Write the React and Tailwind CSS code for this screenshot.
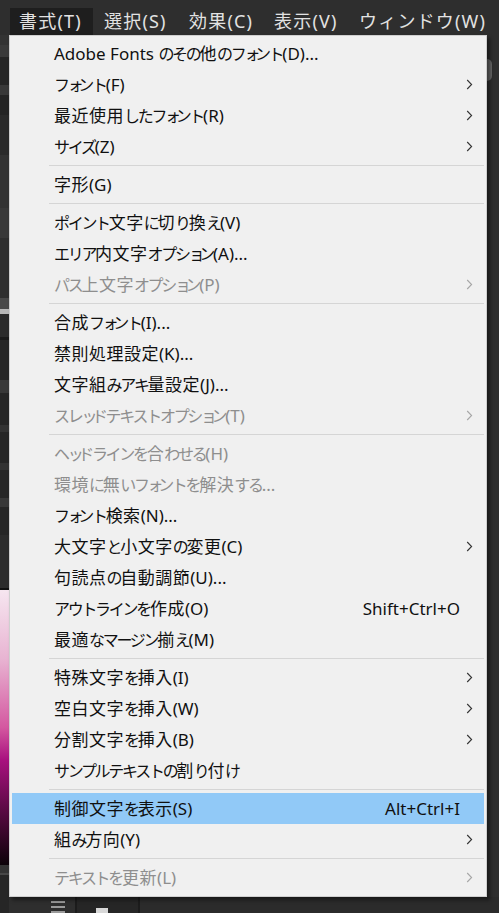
import React from "react";

const FONT = { fontFamily: '"Segoe UI", "Noto Sans", "Noto Sans CJK JP", sans-serif' };

const items = [
  { t: "Adobe Fonts のその他のフォント(D)..." },
  { t: "フォント(F)", sub: true },
  { t: "最近使用したフォント(R)", sub: true },
  { t: "サイズ(Z)", sub: true },
  "sep",
  { t: "字形(G)" },
  "sep",
  { t: "ポイント文字に切り換え(V)" },
  { t: "エリア内文字オプション(A)..." },
  { t: "パス上文字オプション(P)", dis: true, sub: true },
  "sep",
  { t: "合成フォント(I)..." },
  { t: "禁則処理設定(K)..." },
  { t: "文字組みアキ量設定(J)..." },
  { t: "スレッドテキストオプション(T)", dis: true, sub: true },
  "sep",
  { t: "ヘッドラインを合わせる(H)", dis: true },
  { t: "環境に無いフォントを解決する...", dis: true },
  { t: "フォント検索(N)..." },
  { t: "大文字と小文字の変更(C)", sub: true },
  { t: "句読点の自動調節(U)..." },
  { t: "アウトラインを作成(O)", sc: "Shift+Ctrl+O" },
  { t: "最適なマージン揃え(M)" },
  "sep",
  { t: "特殊文字を挿入(I)", sub: true },
  { t: "空白文字を挿入(W)", sub: true },
  { t: "分割文字を挿入(B)", sub: true },
  { t: "サンプルテキストの割り付け" },
  "sep",
  { t: "制御文字を表示(S)", sc: "Alt+Ctrl+I", hl: true },
  { t: "組み方向(Y)", sub: true },
  "sep",
  { t: "テキストを更新(L)", dis: true, sub: true },
];

const SMALL = "ァィゥェォッャュョヮぁぃぅぇぉっゃゅょ";

function cat(ch) {
  if (SMALL.includes(ch)) return "s";
  const c = ch.codePointAt(0);
  if (c >= 0x3040 && c <= 0x30ff) return "k";
  if (c >= 0x4e00 && c <= 0x9fff) return "h";
  return "l";
}

function Txt({ s }) {
  const runs = [];
  for (const ch of s) {
    const k = cat(ch);
    if (runs.length && runs[runs.length - 1].k === k) runs[runs.length - 1].s += ch;
    else runs.push({ k, s: ch });
  }
  return runs.map((r, i) =>
    r.k === "k" ? (
      <span key={i} className="text-[16px] tracking-[-2.3px]">{r.s}</span>
    ) : r.k === "s" ? (
      <span key={i} className="text-[16px] tracking-[-5.5px]">{r.s}</span>
    ) : r.k === "h" ? (
      <span key={i} className="tracking-[0.5px]">{r.s}</span>
    ) : (
      <span key={i}>{r.s}</span>
    )
  );
}

function Chevron({ dis }) {
  return (
    <svg width="7" height="11" viewBox="0 0 7 11" className="block">
      <path d="M1.2 1 L5.6 5.5 L1.2 10" fill="none" stroke={dis ? "#a6a6a6" : "#333333"} strokeWidth="1.1" />
    </svg>
  );
}

function Row({ it }) {
  return (
    <div className={`flex items-center h-[31px] pl-[42px] ${it.hl ? "bg-[#91c9f7]" : ""}`}>
      <span
        className={`flex-1 text-[17px] leading-none whitespace-nowrap ${
          it.dis ? "text-[#8e8e8e]" : "text-[#101010]"
        }`}
      >
        <Txt s={it.t} />
      </span>
      {it.sc && <span className="text-[17px] leading-none text-[#101010] whitespace-nowrap">{it.sc}</span>}
      <div className="w-[24px] h-full flex items-center pl-[6px]">{it.sub && <Chevron dis={it.dis} />}</div>
    </div>
  );
}

function Sep() {
  return (
    <div className="h-[7px] flex items-center pl-[37px]">
      <div className="h-px w-full bg-[#d5d5d5]" />
    </div>
  );
}

const strip = [
  [10, "#333333"],
  [12, "#3a3a3a"],
  [28, "#252525"],
  [10, "#383838"],
  [20, "#242424"],
  [40, "#2a2a2a"],
  [53, "#323232"],
  [30, "#383838"],
  [60, "#2e2e2e"],
  [11, "#484848"],
  [5, "#b8b8b8"],
  [23, "#2b2b2b"],
  [3, "#1a1a1a"],
  [40, "#262626"],
  [13, "#383838"],
  [32, "#262626"],
  [7, "#333333"],
  [31, "#262626"],
  [7, "#333333"],
  [28, "#262626"],
  [9, "#383838"],
  [28, "#262626"],
  [53, "#2c2c2c"],
  [2, "#111111"],
];

export default function App() {
  const bar = ["書式(T)", "選択(S)", "効果(C)", "表示(V)", "ウィンドウ(W)"];
  return (
    <div className="relative w-[499px] h-[913px] overflow-hidden bg-[#2b2b2b]" style={FONT}>
      {/* menu bar */}
      <div className="flex h-[35px] pt-[8px] pl-[10px] bg-[#2e2e2e]">
        {bar.map((b, i) => (
          <div
            key={b}
            className={`h-[27px] flex items-center pl-[9px] text-[18px] tracking-[1.2px] text-[#e2e2e2] whitespace-nowrap ${
              i === 0 ? "w-[83px] mr-[2px] bg-[#1e1e1e]" : "w-[85px]"
            }`}
          >
            {b}
          </div>
        ))}
      </div>

      {/* background app area */}
      <div className="flex h-[878px]">
        <div className="w-[9px] flex flex-col">
          {strip.map(([h, c], i) => (
            <div key={i} style={{ height: h, background: c }} />
          ))}
          <div className="h-[275px] bg-[linear-gradient(to_bottom,#f6e6f0_0%,#e8b4d2_25%,#d458a0_50%,#a8107e_62%,#5a0a44_80%,#0c0208_100%)]" />
          <div className="h-[8px] bg-[#333333]" />
          <div className="h-[2px] bg-[#474747]" />
          <div className="flex-1 bg-[#262626]" />
        </div>
        <div className="flex-1 flex flex-col">
          <div className="h-[862px] flex">
            <div className="flex-1" />
            <div className="w-[12px] bg-[#2e2e2e] pt-[24px]">
              <div className="w-[5px] h-[22px] rounded-r-full bg-[#666666]" />
            </div>
          </div>
          <div className="flex-1 flex bg-[#2b2b2b]">
            <div className="w-[66px] bg-[#2e2e2e] flex flex-col items-end pr-[10px] pt-[4px] gap-[3px]">
              <div className="w-[14px] h-[2px] bg-[#9a9a9a]" />
              <div className="w-[14px] h-[2px] bg-[#9a9a9a]" />
              <div className="w-[14px] h-[2px] bg-[#9a9a9a]" />
            </div>
            <div className="w-[2px] bg-[#1c1c1c]" />
            <div className="w-[61px] bg-[#262626] flex items-end pl-[19px]">
              <div className="w-[12px] h-[5px] bg-[#d8d8d8]" />
            </div>
            <div className="w-[2px] bg-[#1c1c1c]" />
            <div className="flex-1" />
          </div>
        </div>
      </div>

      {/* dropdown menu */}
      <div className="absolute left-[9px] top-[35px] w-[478px] h-[862px] border border-[#cfcfcf] bg-[#f0f0f0] py-[2px] px-[2px] shadow-[3px_3px_4px_rgba(0,0,0,0.45)]">
        {items.map((it, i) => (it === "sep" ? <Sep key={i} /> : <Row key={i} it={it} />))}
      </div>
    </div>
  );
}
